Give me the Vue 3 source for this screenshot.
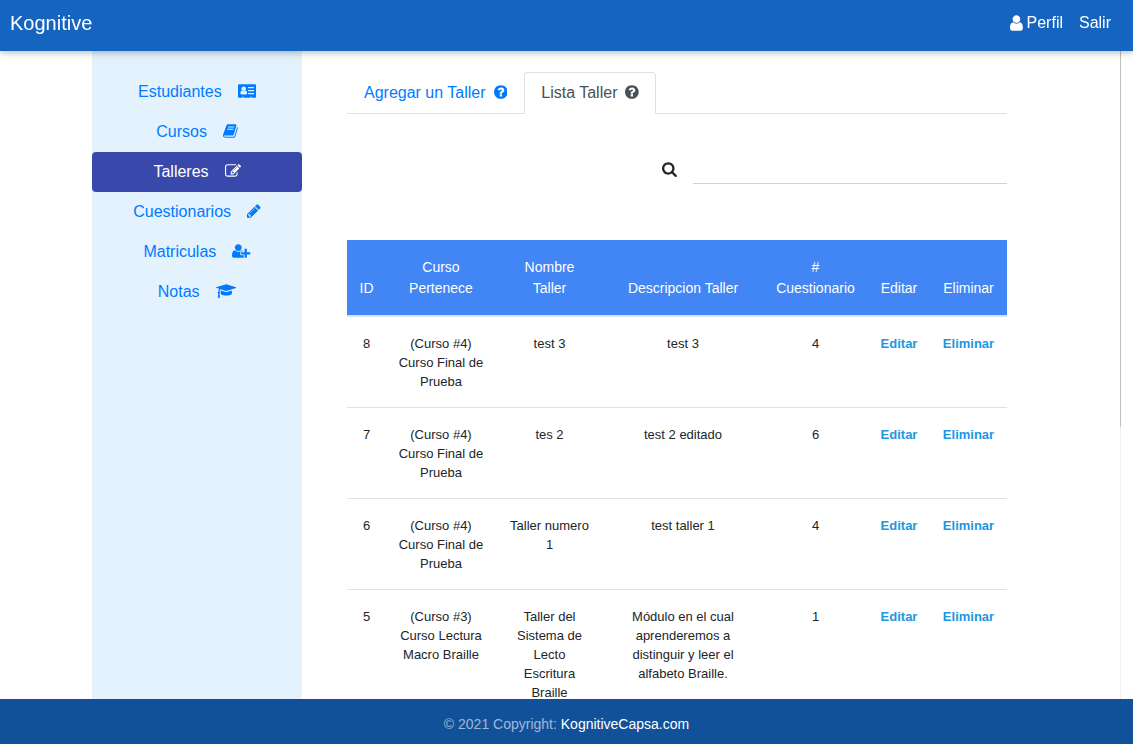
<script setup>
import { ref } from 'vue'

const icons = {
  user: {
    box: '256 0 1280 1792',
    d: 'M1536 1399q0 109-62.5 187t-150.5 78h-854q-88 0-150.5-78t-62.5-187q0-85 8.5-160.5t31.5-152 58.5-131 94-89 134.5-34.5q131 128 313 128t313-128q76 0 134.5 34.5t94 89 58.5 131 31.5 152 8.5 160.5zm-256-887q0 159-112.5 271.5t-271.5 112.5-271.5-112.5-112.5-271.5 112.5-271.5 271.5-112.5 271.5 112.5 112.5 271.5z'
  },
  card: {
    box: '0 0 2048 1792',
    d: 'M160 128h1728q66 0 113 47t47 113v1216q0 66-47 113t-113 47h-352v-96q0-14-9-23t-23-9h-64q-14 0-23 9t-9 23v96H640v-96q0-14-9-23t-23-9h-64q-14 0-23 9t-9 23v96H160q-66 0-113-47T0 1504V288q0-66 47-113t113-47zM640 384q-106 0-181 75t-75 181 75 181 181 75 181-75 75-181-75-181-181-75zM459 832q-203 0-203 310 0 58 40 98t88 40h512q48 0 88-40t40-98q0-310-203-310-82 80-181 80t-181-80zM1120 448v128h672V448zM1120 784v128h672V784zM1120 1120v128h672v-128z'
  },
  book: {
    box: '64 0 1664 1792',
    d: 'M1703 478q40 57 18 129l-275 906q-19 64-76.5 107.5t-122.5 43.5h-923q-77 0-148.5-53.5t-99.5-131.5q-24-67-2-127 0-4 3-27t4-37q1-8-3-21.5t-3-19.5q2-11 8-21t16.5-23.5 16.5-23.5q23-38 45-91.5t30-91.5q3-10 .5-30t-.5-28q3-11 17-28t17-23q21-36 42-92t25-90q1-9-2.5-32t.5-28q4-13 22-30.5t22-22.5q19-26 42.5-84.5t27.5-96.5q1-8-3-25.5t-2-26.5q2-8 9-18t18-23 17-21q8-12 16.5-30.5t15-35 16-36 19.5-32 26.5-23.5 36-11.5 47.5 5.5l-1 3q38-9 51-9h761q74 0 114 56t18 130l-274 906q-36 119-71.5 153.5t-128.5 34.5h-869q-27 0-38 15-11 16-1 43 24 70 144 70h923q29 0 56-15.5t35-41.5l300-987q7-22 5-57 38 15 59 43zm-1064 2q-4 13 2 22.5t20 9.5h608q13 0 25.5-9.5t16.5-22.5l21-64q4-13-2-22.5t-20-9.5h-608q-13 0-25.5 9.5t-16.5 22.5zm-83 256q-4 13 2 22.5t20 9.5h608q13 0 25.5-9.5t16.5-22.5l21-64q4-13-2-22.5t-20-9.5h-608q-13 0-25.5 9.5t-16.5 22.5z'
  },
  edit: {
    box: '0 0 1792 1792',
    d: 'M888 1184l116-116-152-152-116 116v56h96v96h56zm440-720q-16-16-33 1l-350 350q-17 17-1 33t33-1l350-350q17-17 1-33zm80 594v190q0 119-84.5 203.5t-203.5 84.5h-832q-119 0-203.5-84.5t-84.5-203.5v-832q0-119 84.5-203.5t203.5-84.5h832q63 0 117 25 15 7 18 23 3 17-9 29l-49 49q-14 14-32 8-23-6-45-6h-832q-66 0-113 47t-47 113v832q0 66 47 113t113 47h832q66 0 113-47t47-113v-126q0-13 9-22l64-64q15-15 35-7t20 29zm-96-738l288 288-672 672h-288v-288zm444 132l-92 92-288-288 92-92q28-28 68-28t68 28l152 152q28 28 28 68t-28 68z'
  },
  pencil: {
    box: '128 0 1536 1792',
    d: 'M491 1536l91-91-235-235-91 91v107h128v128h107zm523-928q0-22-22-22-10 0-17 7l-542 542q-7 7-7 17 0 22 22 22 10 0 17-7l542-542q7-7 7-17zm-54-192l416 416-832 832h-416v-416zm683 96q0 53-37 90l-166 166-416-416 166-165q36-38 90-38 53 0 91 38l235 234q37 39 37 91z'
  },
  userPlus: {
    box: '0 0 2048 1792',
    d: 'M704 896q-159 0-271.5-112.5t-112.5-271.5 112.5-271.5 271.5-112.5 271.5 112.5 112.5 271.5-112.5 271.5-271.5 112.5zm960 128h352q13 0 22.5 9.5t9.5 22.5v192q0 13-9.5 22.5t-22.5 9.5h-352v352q0 13-9.5 22.5t-22.5 9.5h-192q-13 0-22.5-9.5t-9.5-22.5v-352h-352q-13 0-22.5-9.5t-9.5-22.5v-192q0-13 9.5-22.5t22.5-9.5h352v-352q0-13 9.5-22.5t22.5-9.5h192q13 0 22.5 9.5t9.5 22.5v352zm-736 224q0 52 38 90t90 38h256v238q-68 50-171 50h-874q-121 0-194-69t-73-190q0-53 3.5-103.5t14-109 26.5-108.5 43-97.5 62-81 85.5-53.5 111.5-20q19 0 39 17 79 61 154.5 91.5t164.5 30.5 164.5-30.5 154.5-91.5q20-17 39-17 132 0 217 96h-223q-52 0-90 38t-38 90v192z'
  },
  cap: {
    box: '0 0 2304 1792',
    d: 'M1774 836l18 316q4 69-82 128t-235 93.5-323 34.5-323-34.5-235-93.5-82-128l18-316 574 181q22 7 48 7t48-7zm530-324q0 23-22 31l-1120 352q-4 1-10 1t-10-1l-652-206q-43 34-71 111.5t-34 178.5q63 36 63 109 0 69-58 107l58 433q2 14-8 25-9 11-24 11h-192q-15 0-24-11-10-11-8-25l58-433q-58-38-58-107 0-73 65-111 11-207 98-330l-333-104q-22-8-22-31t22-31l1120-352q4-1 10-1t10 1l1120 352q22 8 22 31z'
  },
  help: {
    box: '128 0 1536 1792',
    d: 'M1024 1376v-192q0-14-9-23t-23-9h-192q-14 0-23 9t-9 23v192q0 14 9 23t23 9h192q14 0 23-9t9-23zm256-672q0-88-55.5-163t-138.5-116-170-41q-243 0-371 213-15 24 8 42l132 100q7 6 19 6 16 0 25-12 53-68 86-92 34-24 86-24 48 0 85.5 26t37.5 59q0 38-20 61t-68 45q-63 28-115.5 86.5t-52.5 125.5v36q0 14 9 23t23 9h192q14 0 23-9t9-23q0-19 21.5-49.5t54.5-49.5q32-18 49-28.5t46-35 44.5-48 28-60.5 12.5-81zm384 192q0 209-103 385.5t-279.5 279.5-385.5 103-385.5-103-279.5-279.5-103-385.5 103-385.5 279.5-279.5 385.5-103 385.5 103 279.5 279.5 103 385.5z'
  },
  search: {
    box: '64 0 1664 1792',
    d: 'M1216 832q0-185-131.5-316.5t-316.5-131.5-316.5 131.5-131.5 316.5 131.5 316.5 316.5 131.5 316.5-131.5 131.5-316.5zm512 832q0 52-38 90t-90 38q-54 0-90-38l-343-342q-179 124-399 124-143 0-273.5-55.5t-225-150-150-225-55.5-273.5 55.5-273.5 150-225 225-150 273.5-55.5 273.5 55.5 225 150 150 225 55.5 273.5q0 220-124 399l343 343q37 37 37 90z'
  }
}

const menu = [
  { label: 'Estudiantes', icon: icons.card },
  { label: 'Cursos', icon: icons.book },
  { label: 'Talleres', icon: icons.edit, active: true },
  { label: 'Cuestionarios', icon: icons.pencil },
  { label: 'Matriculas', icon: icons.userPlus },
  { label: 'Notas', icon: icons.cap }
]

const tabs = [
  { label: 'Agregar un Taller' },
  { label: 'Lista Taller', active: true }
]

const columns = ['ID', 'Curso Pertenece', 'Nombre Taller', 'Descripcion Taller', '# Cuestionario', 'Editar', 'Eliminar']

const rows = [
  { id: 8, curso: '(Curso #4) Curso Final de Prueba', nombre: 'test 3', descripcion: 'test 3', cuestionario: 4 },
  { id: 7, curso: '(Curso #4) Curso Final de Prueba', nombre: 'tes 2', descripcion: 'test 2 editado', cuestionario: 6 },
  { id: 6, curso: '(Curso #4) Curso Final de Prueba', nombre: 'Taller numero 1', descripcion: 'test taller 1', cuestionario: 4 },
  { id: 5, curso: '(Curso #3) Curso Lectura Macro Braille', nombre: 'Taller del Sistema de Lecto Escritura Braille', descripcion: 'Módulo en el cual aprenderemos a distinguir y leer el alfabeto Braille.', cuestionario: 1 }
]

const query = ref('')
</script>

<template>
  <div class="page">
    <header class="navbar">
      <a class="brand" href="#">Kognitive</a>
      <nav class="account">
        <a href="#">
          <svg class="icon" :viewBox="icons.user.box" aria-hidden="true"><path :d="icons.user.d" /></svg>
          <span>Perfil</span>
        </a>
        <a href="#">Salir</a>
      </nav>
    </header>

    <div class="body">
      <div class="scroller">
        <aside class="sidebar">
          <a v-for="item in menu" :key="item.label" class="menu-item" :class="{ active: item.active }" href="#">
            <span>{{ item.label }}</span>
            <svg class="icon" :viewBox="item.icon.box" aria-hidden="true"><path fill-rule="evenodd" :d="item.icon.d" /></svg>
          </a>
        </aside>

        <main class="content">
          <nav class="tabs">
            <a v-for="tab in tabs" :key="tab.label" class="tab" :class="{ active: tab.active }" href="#">
              <span>{{ tab.label }}</span>
              <svg class="icon" :viewBox="icons.help.box" aria-hidden="true"><path :d="icons.help.d" /></svg>
            </a>
          </nav>

          <form class="search" @submit.prevent>
            <label for="buscar" aria-label="Buscar">
              <svg class="icon" :viewBox="icons.search.box" aria-hidden="true"><path :d="icons.search.d" /></svg>
            </label>
            <input id="buscar" v-model="query" type="text" />
          </form>

          <table>
            <colgroup>
              <col class="c-id" />
              <col class="c-curso" />
              <col class="c-nombre" />
              <col class="c-desc" />
              <col class="c-cuest" />
              <col class="c-editar" />
              <col class="c-eliminar" />
            </colgroup>
            <thead>
              <tr>
                <th v-for="c in columns" :key="c" scope="col">{{ c }}</th>
              </tr>
            </thead>
            <tbody>
              <tr v-for="r in rows" :key="r.id">
                <td>{{ r.id }}</td>
                <td>{{ r.curso }}</td>
                <td>{{ r.nombre }}</td>
                <td>{{ r.descripcion }}</td>
                <td>{{ r.cuestionario }}</td>
                <td><a href="#">Editar</a></td>
                <td><a href="#">Eliminar</a></td>
              </tr>
            </tbody>
          </table>
        </main>
      </div>
      <div class="rail"><div class="thumb"></div></div>
    </div>

    <footer class="footer">© 2021 Copyright: <a href="#">KognitiveCapsa.com</a></footer>
  </div>
</template>

<style>
body {
  background: #fff;
}
</style>

<style scoped>
.page {
  display: flex;
  flex-direction: column;
  height: 100vh;
  font-family: "Liberation Sans", Arial, sans-serif;
  font-size: 16px;
  line-height: 24px;
  color: #212529;
}

.page * {
  box-sizing: border-box;
}

a {
  color: #007bff;
  text-decoration: none;
}

.icon {
  display: block;
  flex: none;
  height: 16px;
  margin-bottom: 2px;
  fill: currentColor;
}

.navbar {
  position: relative;
  z-index: 1;
  display: flex;
  justify-content: space-between;
  align-items: center;
  padding: 8px 22px 13px 10px;
  background: #1565c0;
  box-shadow: 0 2px 5px rgba(0, 0, 0, 0.16), 0 2px 10px rgba(0, 0, 0, 0.12);
}

.navbar a {
  color: #fff;
}

.brand {
  font-size: 20px;
  line-height: 30px;
}

.account {
  display: flex;
  gap: 16px;
}

.account a {
  display: flex;
  align-items: center;
  gap: 4px;
}

.account .icon {
  height: 18px;
  margin-bottom: 0;
}

.body {
  display: flex;
  flex: 1;
  min-height: 0;
  padding-right: 12px;
}

.scroller {
  display: flex;
  flex: 1;
  overflow-y: auto;
  scrollbar-width: none;
  padding-left: 92px;
}

.rail {
  width: 1px;
  background: #f0f0f0;
}

.thumb {
  height: 58%;
  background: #c1c1c1;
}

.sidebar {
  position: sticky;
  top: 0;
  flex: none;
  width: 210px;
  height: 100%;
  padding-top: 21px;
  background: #e3f2fd;
}

.menu-item {
  display: flex;
  justify-content: center;
  align-items: center;
  gap: 16px;
  padding: 8px 16px;
  border-radius: 4px;
}

.menu-item.active {
  background: #3949ab;
  color: #fff;
}

.content {
  flex: 1;
  height: max-content;
  padding: 21px 113px 24px 45px;
}

.tabs {
  display: flex;
  border-bottom: 1px solid #dee2e6;
}

.tab {
  display: flex;
  align-items: center;
  gap: 8px;
  padding: 8px 16px;
  margin-bottom: -1px;
  border: 1px solid transparent;
  border-radius: 4px 4px 0 0;
}

.tab.active {
  color: #495057;
  background: #fff;
  border-color: #dee2e6 #dee2e6 #fff;
}

.search {
  display: flex;
  justify-content: flex-end;
  align-items: center;
  gap: 16px;
  margin: 32px 0 56px;
}

.search label {
  padding-top: 10px;
}

.search input {
  width: calc(50% - 16px);
  height: 38px;
  padding: 8px 0;
  border: 0;
  border-bottom: 1px solid #ced4da;
  background: transparent;
  font: inherit;
  outline: none;
}

table {
  width: 100%;
  table-layout: fixed;
  border-collapse: separate;
  border-spacing: 0;
  text-align: center;
}

.c-id { width: 39px; }
.c-curso { width: 110px; }
.c-nombre { width: 107px; }
.c-desc { width: 160px; }
.c-cuest { width: 105px; }
.c-editar { width: 62px; }
.c-eliminar { width: 77px; }

th,
td {
  padding: 17px 10px 16px;
}

th {
  background: #4285f4;
  border-bottom: 2px solid #dee2e6;
  color: #fff;
  font-size: 14px;
  line-height: 21px;
  font-weight: 500;
  vertical-align: bottom;
}

td {
  border-bottom: 1px solid #dee2e6;
  font-size: 13px;
  line-height: 19px;
  vertical-align: top;
}

th:nth-child(3),
td:nth-child(3) {
  padding-right: 12px;
  padding-left: 12px;
}

td:nth-child(4) {
  padding-right: 24px;
  padding-left: 24px;
}

td a {
  color: #2196e0;
  font-weight: 700;
}

.footer {
  padding: 15px 16px 9px;
  background: #11519a;
  color: rgba(255, 255, 255, 0.6);
  font-size: 14px;
  line-height: 21px;
  text-align: center;
}

.footer a {
  color: #fff;
}
</style>
